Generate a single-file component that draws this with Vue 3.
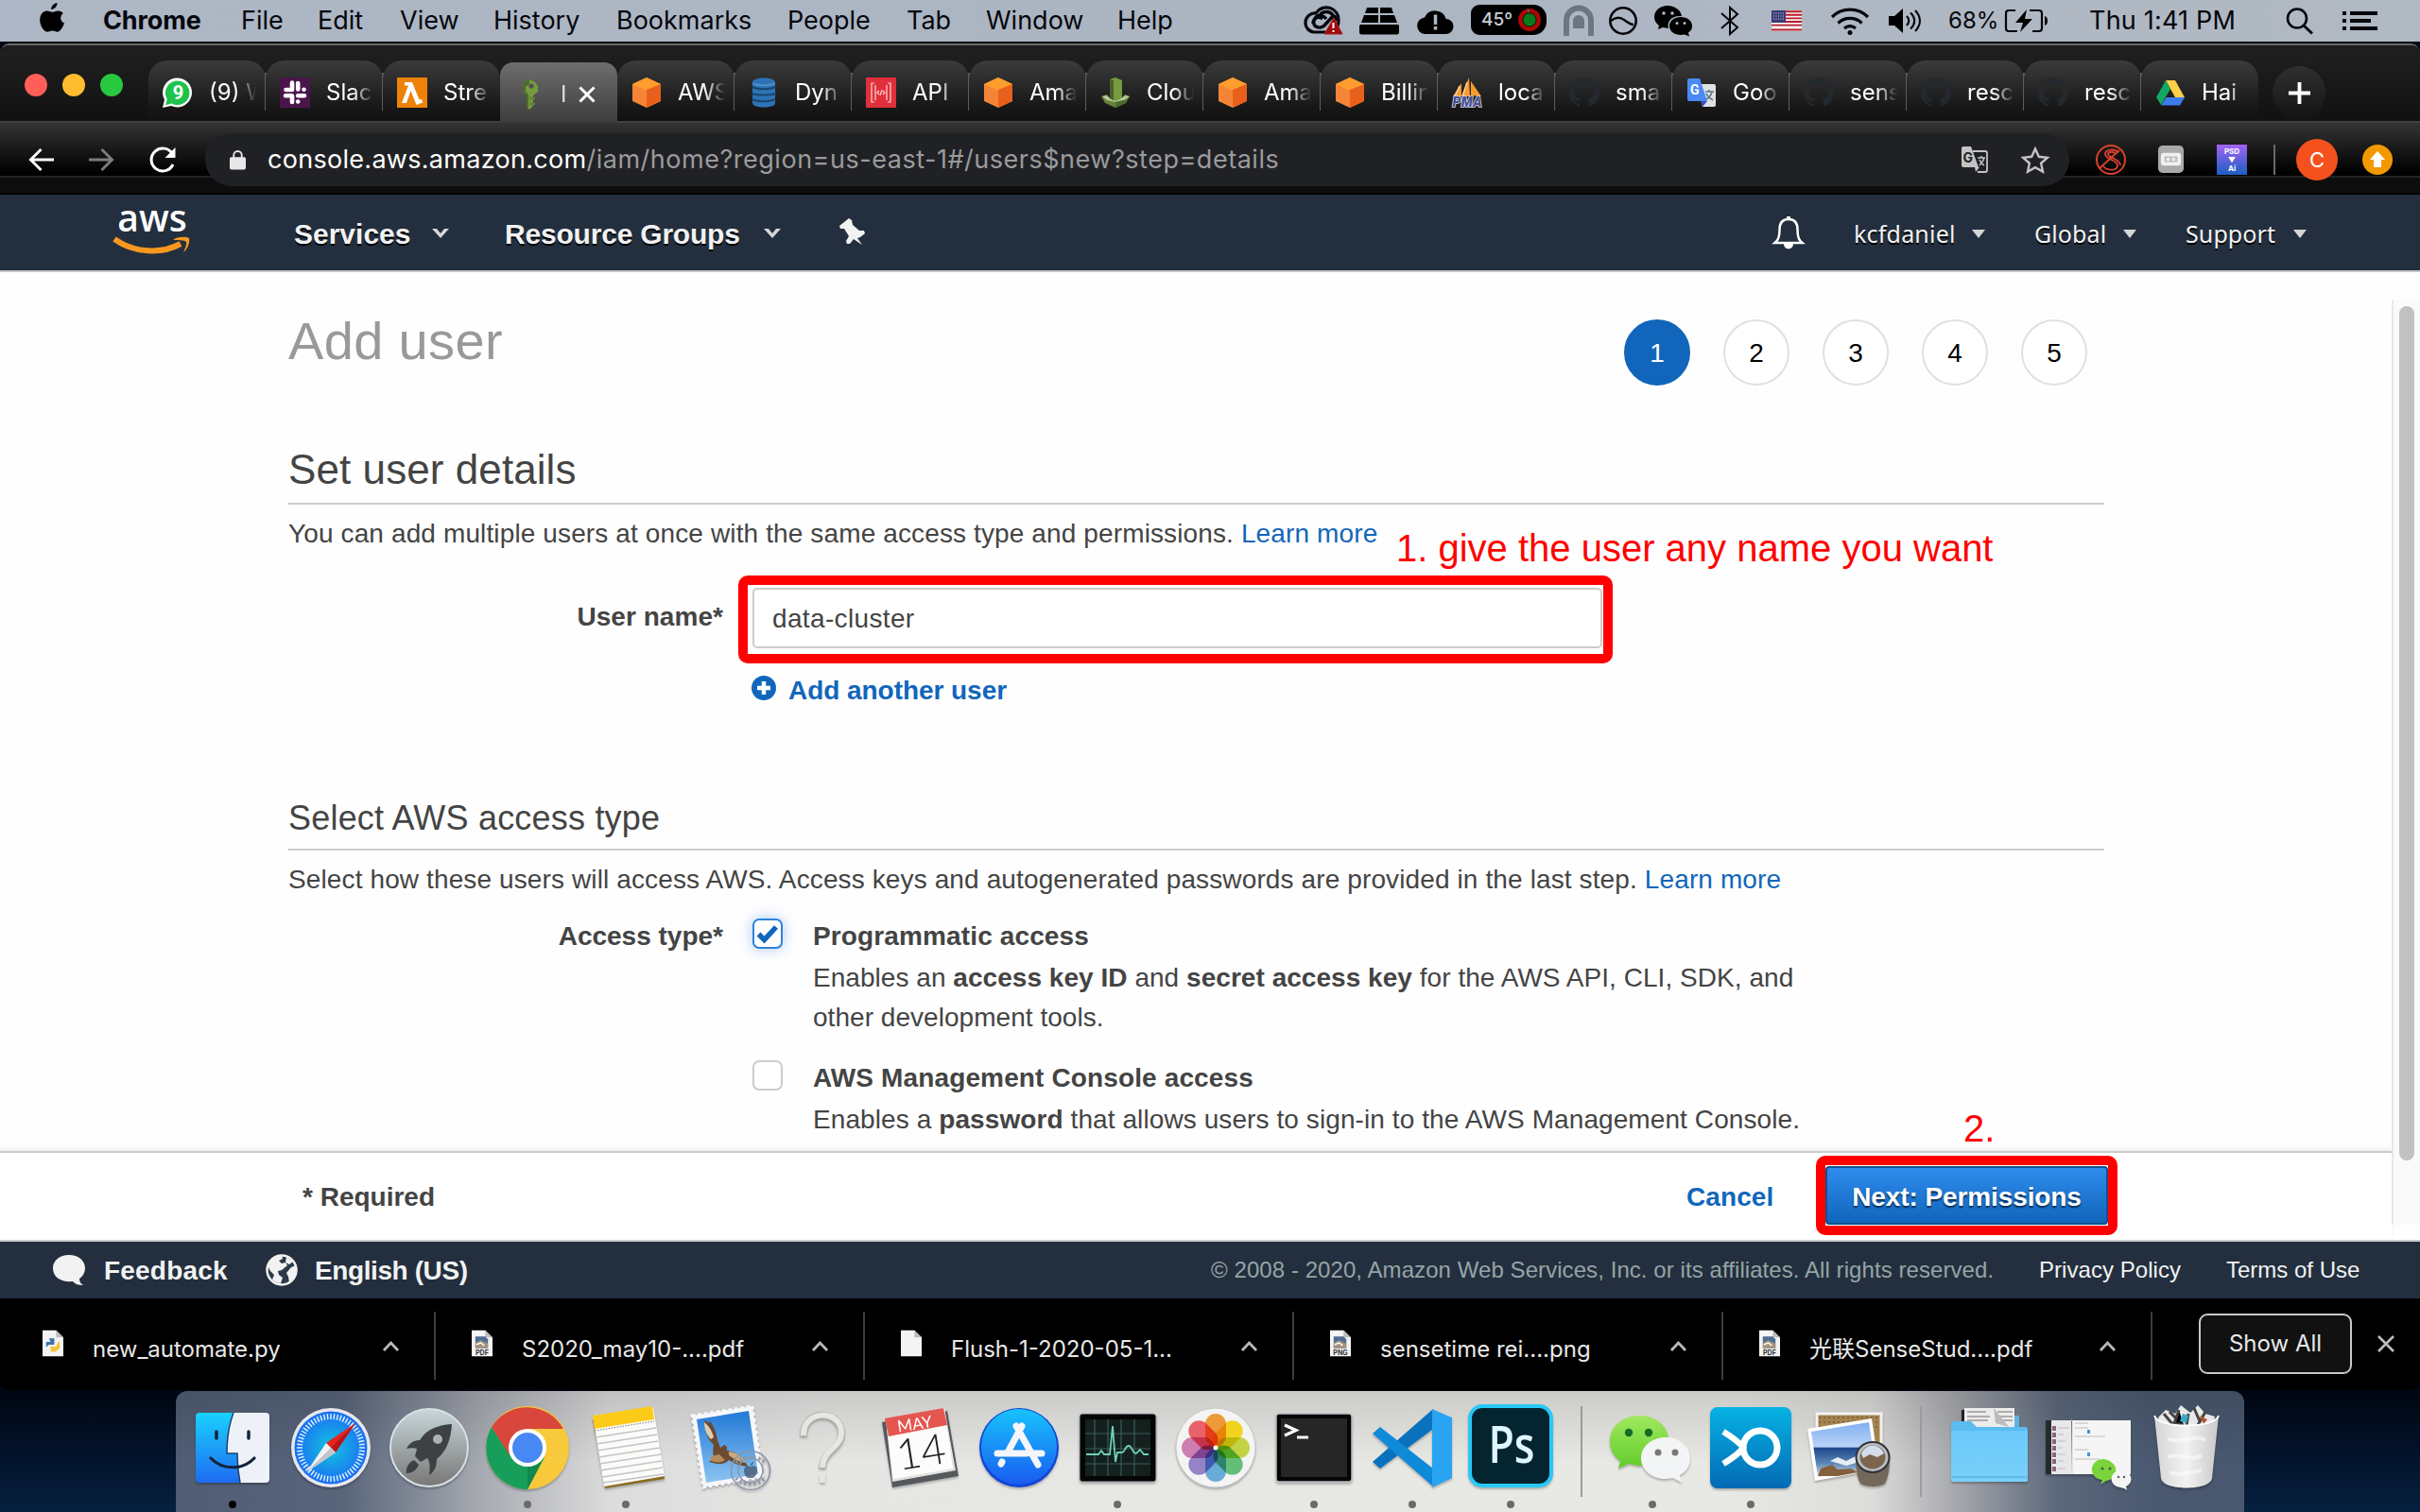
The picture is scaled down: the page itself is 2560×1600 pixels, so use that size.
<script setup>
const menus = [
  { t: 'Chrome', w: 146, bold: true },
  { t: 'File', w: 81 },
  { t: 'Edit', w: 87 },
  { t: 'View', w: 99 },
  { t: 'History', w: 130 },
  { t: 'Bookmarks', w: 181 },
  { t: 'People', w: 126 },
  { t: 'Tab', w: 84 },
  { t: 'Window', w: 139 },
  { t: 'Help', w: 100 },
]

const cube = `<path d="M16 0 31 7v18l-15 7L1 25V7z" fill="#f58536"/><path d="M16 0 31 7 16 14 1 7z" fill="#ff9d2e"/><path d="M16 13 31 7v18l-15 7z" fill="#e8601c"/>`
const github = `<path d="M16 0C7 0 0 7 0 16c0 7 4.500 13 11 15v-3.500c-4 .9-5-1.700-5.500-3C5 23.300 4 22.700 3.500 22c2.500-.5 3.500 3 5.500 3.300.9.1 1.700 0 2.300-.4.100-1.100.6-2 1.200-2.500-4-.6-7-2.400-7-8 0-1.700.6-3.200 1.600-4.300-.3-1.300-.2-2.900.4-4.300 1.700 0 3.100.9 4.300 1.800a15 15 0 0 1 8.400 0c1.200-.9 2.600-1.800 4.300-1.800.6 1.400.7 3 .4 4.300 1 1.100 1.600 2.600 1.600 4.300 0 5.600-3 7.400-7 8 .8.700 1.300 2 1.300 3.500V31C27.500 29 32 23 32 16 32 7 25 0 16 0z" fill="#24292e"/>`
const art = {
  whatsapp: `<path d="M0 32l2-8.500A15.500 15.500 0 1 1 9 30z" fill="#fff"/><path d="M3 29.200 4.800 23a12.800 12.800 0 1 1 4.700 4.500z" fill="#1fc24c"/><text x="16.500" y="23" font-size="20" font-weight="700" text-anchor="middle" fill="#fff">9</text>`,
  slack: `<rect width="32" height="32" fill="#4a154b"/><g stroke="#fff" stroke-width="4.600" stroke-linecap="round"><path d="M13 5.500v7M6.500 13h0M19.200 6v6.500M25.500 12.700h0M13 19.500V26M6 19.200h6.500M19.200 19.200H26M19.200 25.500v0M13 13H6.500"/></g>`,
  lambda: `<rect width="32" height="32" fill="#ee8208"/><path d="M8 5h8l7.500 18.500 2.500-.8 1.200 3.800-6.700 2.500L14.500 14 10 27H5l7-18.500H8z" fill="#fff"/>`,
  key: `<path d="M10 3l6-3 6 3 3 4v6l-5 4v11l-4 4-3-3V17l-4-4V7z" fill="#759c3e"/><path d="M10 3l6-3v5l-4 3v5l3 3v14l-2-1V17l-4-4V7z" fill="#4b6b2c"/><circle cx="18" cy="7" r="2.600" fill="#505050"/><path d="M16 18l6 1v2l-6 1zM16 24l6 1v2l-6 1z" fill="#648339"/>`,
  cube,
  dynamo: `<path d="M4 5c0-6 24-6 24 0v22c0 6-24 6-24 0z" fill="#2e73b8"/><path d="M4 10c5 3 19 3 24 0M3 17c5 2 21 2 26 0M4 23c5 3 19 3 24 0" stroke="#1a476f" stroke-width="2.200" fill="none"/><path d="M4 6c5 3 19 3 24 0" stroke="#5294cf" stroke-width="1.500" fill="none"/>`,
  api: `<rect width="32" height="32" fill="#e0303b"/><path d="M9 6H6v20h3M23 6h3v20h-3M10 8v16M22 8v16M14 14l-2 2 2 2M18 14l2 2-2 2M17 13l-2 6" stroke="#ffd9da" stroke-width="1.200" fill="none"/>`,
  cloud9: `<path d="M10 2l6-2 7 3v20l-7 4-6-3z" fill="#759c3e"/><path d="M10 2l4 1v22l-4-2z" fill="#4b612c"/><path d="M1 20l6-2 4 6 5 2 6-3 4-5 5 2-4 7-11 5-11-5z" fill="#648339"/><path d="M2 20l5-1 4 4 5 2 5-2 5-4 5 1-6 4-9 2-9-2z" fill="#b7ca9d"/><path d="M16 26v6l11-5 2-4z" fill="#4b6b2c"/>`,
  pma: `<path d="M18 0l1 20H10zM10 6v14H1zM20 4l11 16-11-1z" fill="#f89c2e"/><path d="M16 5l-5 15M8 9 3 20" stroke="#fbd3a0" stroke-width="1.500"/><text x="16" y="31" font-size="14" font-weight="900" font-style="italic" text-anchor="middle" fill="#4a508f" stroke="#d5d8ea" stroke-width="1.600" paint-order="stroke" textLength="31">PMA</text>`,
  github,
  gtrans: `<path d="M12 7h17a2 2 0 0 1 2 2v20a2 2 0 0 1-2 2H17z" fill="#dfe1e5"/><path d="M3 1h11l8 24H3a2 2 0 0 1-2-2V3a2 2 0 0 1 2-2z" fill="#4a8af4"/><path d="M15 25h7l-5 6z" fill="#3a4fc0"/><path d="M20 15h9M24 13v2M27 15c-1 4-4 7-6 8M21 17c1 3 4 5 7 7" stroke="#607988" stroke-width="1.600" fill="none"/><text x="4" y="18" font-size="14" font-weight="700" fill="#fff">G</text>`,
  drive: `<path d="M11 3h10l10 18H21z" fill="#ffcf48"/><path d="M11 3l5 9L6 29 1 21z" fill="#11a861"/><path d="M11.500 21H31l-5 8.500H6z" fill="#3b7ded"/>`,
}
const tabs = [
  ['whatsapp', '(9) W'], ['slack', 'Slac'], ['lambda', 'Stre'], ['key', 'I', true],
  ['cube', 'AWS'], ['dynamo', 'Dyn'], ['api', 'API'], ['cube', 'Ama'], ['cloud9', 'Clou'],
  ['cube', 'Ama'], ['cube', 'Billin'], ['pma', 'loca'], ['github', 'sma'], ['gtrans', 'Goo'],
  ['github', 'sens'], ['github', 'resc'], ['github', 'resc'], ['drive', 'Hai'],
]
const downloads = [
  ['new_automate.py', 'py'], ['S2020_may10-....pdf', 'PDF'], ['Flush-1-2020-05-1...', ''],
  ['sensetime rei....png', 'PNG'], ['光联SenseStud....pdf', 'PDF'],
]
const ticks = Array.from({ length: 60 }, (_, i) => i * 6)
const petals = ['#f7941e', '#fdd900', '#c5d92d', '#54c06a', '#5aa9e0', '#8f77c9', '#d274b0', '#f4515a']
</script>

<template>
  <div class="screen">
    <!-- macOS menu bar -->
    <header class="menubar">
      <svg class="apple" viewBox="0 0 28 32"><path d="M19.500 0c.3 3.500-3 7-6.300 6.900C12.900 3.600 16.200.3 19.500 0zM25.800 11c-3.300 2-3.800 8.300 1.200 10.600-1.200 3.800-4.200 9-7.200 9.200-2 .1-3-1.200-5.300-1.200-2.400 0-3.300 1.200-5.200 1.200C5.500 30.800 1.500 24.500 1.200 18.700.9 12.400 4.700 8.600 8.700 8.500c2.300 0 3.900 1.300 5.600 1.300 1.700 0 3.400-1.500 6.400-1.400 1.900.1 3.900 1 5.100 2.600z"/></svg>
      <span v-for="m in menus" :key="m.t" class="menu" :class="{ bold: m.bold }" :style="{ width: m.w + 'px' }">{{ m.t }}</span>
      <div class="status">
        <div class="cell c1"><svg width="42" height="30" viewBox="0 0 42 30"><path d="M24 27H12A10 10 0 1 1 14 7a13 13 0 0 1 24 8c0 4-2 8-5 10" fill="none" stroke="#05060c" stroke-width="3.200"/><path d="M25 13c-3-4-8-5-11-2s-3 8 0 10 7 1 9-1l8-9c3-2 5 1 4 4M11 18c0-5 5-9 10-5M18 9c4-5 12-5 15 2" fill="none" stroke="#05060c" stroke-width="3.400"/><path d="M33 12 42 29H23z" fill="#9c0a0e" stroke="#b01a1e" stroke-linejoin="round"/><path d="M32.500 17v6M32.500 25v2" stroke="#fff" stroke-width="2"/></svg></div>
        <div class="cell c2"><svg width="42" height="29" viewBox="0 0 42 29"><path d="M8 0h12v6H6zM22 0h12l2 6H22zM5 8h15v8H2zM22 8h15l3 8H22z"/><path d="M1.500 18h39a1.500 1.500 0 0 1 1.500 1.500V26a2.500 2.500 0 0 1-2.500 2.500h-37A2.500 2.500 0 0 1 0 26v-6.500A1.500 1.500 0 0 1 1.500 18z"/></svg></div>
        <div class="cell c3"><svg width="41" height="27" viewBox="0 0 41 27"><path d="M9 27a8.800 8.800 0 0 1 0-17.500A12 12 0 0 1 31.500 11a8 8 0 0 1 0 16z"/><path d="M20.500 6.500V17M20.500 19v3.500" stroke="#adb7c4" stroke-width="3.500"/></svg></div>
        <div class="cell c4"><div class="temp"><b>45º</b><svg width="24" height="24" viewBox="0 0 24 24"><circle cx="12" cy="12" r="9.700" fill="none" stroke="#ab0505" stroke-width="4.600"/><path d="M9 0.500h3v4H10z" fill="#555"/><circle cx="12" cy="12" r="7" fill="#0b7a1c" stroke="#0a2a10" stroke-width="1"/></svg></div></div>
        <div class="cell c5"><svg width="32" height="32" viewBox="0 0 32 32"><path d="M3 32V15.500a13 13 0 0 1 26 0V32" fill="none" stroke="#6a7682" stroke-width="6"/><path d="M10 24v-8a6 6 0 0 1 12 0v8z" fill="#6a7682"/></svg></div>
        <div class="cell c6"><svg width="30" height="30" viewBox="0 0 30 30"><circle cx="15" cy="15" r="13.700" fill="none" stroke="#05060c" stroke-width="2.600"/><path d="M2 15c5-4 10-4 14-1s7 5 10 5" fill="none" stroke="#05060c" stroke-width="2.400"/></svg></div>
        <div class="cell c7"><svg width="41" height="32" viewBox="0 0 41 32"><path d="M14 0C6 0 0 5 0 12c0 4 2 7 5 9l-1 4 5-2 6 1c-2-8 4-14 14-13C28 4 21 0 14 0z"/><path d="M28 12c-7 0-12 4-12 9.500S21 31 28 31l4-.5 5 2-1-4c3-2 4-4 4-7 0-5.500-5-9.500-12-9.500z"/><g fill="#adb7c4"><circle cx="10" cy="8" r="1.800"/><circle cx="19" cy="8" r="1.800"/><circle cx="24" cy="18.500" r="1.500"/><circle cx="32" cy="18.500" r="1.500"/></g></svg></div>
        <div class="cell c8"><svg width="20" height="32" viewBox="0 0 20 32"><path d="M1 8l17 15-8 7V2l8 7L1 24" fill="none" stroke="#05060c" stroke-width="2"/></svg></div>
        <div class="cell c9"><svg width="32" height="22" viewBox="0 0 32 22"><path fill="#f4f4f6" d="M0 0h32v22H0z"/><path d="M0 1.200h32M0 4.800h32M0 8.400h32M0 12h32M0 15.600h32M0 20.500h32" stroke="#b81c28" stroke-width="1.900"/><path fill="#3a3b78" d="M0 0h15v13H0z"/><path d="M2 3h12M2 6h12M2 9h12" stroke="#ddd" stroke-width="1" stroke-dasharray="1 1.500"/></svg></div>
        <div class="cell c10"><svg width="42" height="29" viewBox="0 0 42 29"><path d="M2 10a27 27 0 0 1 38 0M8.500 16.500a18 18 0 0 1 25 0M15 22a9 9 0 0 1 12 0" fill="none" stroke="#05060c" stroke-width="3.200"/><circle cx="21" cy="26.500" r="2.500"/></svg></div>
        <div class="cell c11"><svg width="34" height="26" viewBox="0 0 34 26"><path d="M0 8h6l9-8v26l-9-8H0z"/><path d="M19 8c3 3 3 7 0 10M23 4.500c5.500 5 5.500 12 0 17M28 2c6.500 7 6.500 15 0 22" fill="none" stroke="#05060c" stroke-width="2.200"/></svg></div>
        <div class="cell c12">68%</div>
        <div class="cell c13"><svg width="47" height="26" viewBox="0 0 47 26"><path d="M12 2H5a3 3 0 0 0-3 3v16a3 3 0 0 0 3 3h9M27 2h10a3 3 0 0 1 3 3v16a3 3 0 0 1-3 3H30" fill="none" stroke="#05060c" stroke-width="2.200"/><path d="M24 1 12 15h8l-3 10 13-14h-8z"/><path d="M43 8c4 1 4 9 0 10z"/></svg></div>
        <div class="cell c14">Thu 1:41 PM</div>
        <div class="cell c15"><svg width="30" height="28" viewBox="0 0 30 28"><circle cx="12" cy="11.500" r="10" fill="none" stroke="#05060c" stroke-width="2.600"/><path d="M19 19l9 8.500" stroke="#05060c" stroke-width="3"/></svg></div>
        <div class="cell c16"><svg width="37" height="20" viewBox="0 0 37 20"><path d="M0 2h4M8 2h29M0 10h4M8 10h22M0 18h4M8 18h29" stroke="#05060c" stroke-width="4"/></svg></div>
      </div>
    </header>

    <!-- Browser window -->
    <div class="window">
      <div class="tabstrip">
        <div class="lights"><i class="r"></i><i class="y"></i><i class="g"></i></div>
        <div v-for="(t, i) in tabs" :key="i" class="tab" :class="{ active: t[2], nosep: i === 2 || i === 17 }">
          <svg class="fav" viewBox="0 0 32 32" v-html="art[t[0]]"></svg>
          <span class="title">{{ t[1] }}</span>
          <svg v-if="t[2]" class="tclose" viewBox="0 0 18 18"><path d="M1.500 1.500l15 15M16.500 1.500l-15 15" stroke="#fff" stroke-width="3"/></svg>
        </div>
        <div class="newtab"><svg viewBox="0 0 26 26"><path d="M13 1v24M1 13h24" stroke="#fff" stroke-width="4"/></svg></div>
      </div>
      <div class="toolbar">
        <svg class="back" viewBox="0 0 28 26"><path d="M28 13H3M14 1.500 2.500 13 14 24.500" fill="none" stroke="#fff" stroke-width="3"/></svg>
        <svg class="fwd" viewBox="0 0 28 26"><path d="M0 13h25M14 1.500 25.500 13 14 24.500" fill="none" stroke="#7d7d7d" stroke-width="3"/></svg>
        <svg class="reload" viewBox="0 0 28 28"><path d="M24.500 19A12 12 0 1 1 24 8" fill="none" stroke="#fff" stroke-width="3"/><path d="M27 1v11H16z" fill="#fff"/></svg>
        <div class="omnibox">
          <svg class="lock" viewBox="0 0 18 22"><rect y="8" width="18" height="14" rx="2" fill="#e8e8e8"/><path d="M4.500 9V6a4.500 4.500 0 0 1 9 0v3" fill="none" stroke="#e8e8e8" stroke-width="2"/></svg>
          <span class="host">console.aws.amazon.com</span><span class="path">/iam/home?region=us-east-1#/users$new?step=details</span>
          <svg class="gt" viewBox="0 0 28 28"><path d="M12 5h13a2 2 0 0 1 2 2v18a2 2 0 0 1-2 2H17" fill="none" stroke="#c3c3c3" stroke-width="1.800"/><path d="M2 0h8l8 22H2a2 2 0 0 1-2-2V2a2 2 0 0 1 2-2z" fill="#c3c3c3"/><path d="M14 22h5l-4 5z" fill="#c3c3c3"/><path d="M17 12h8M21 10v2M24 12c-1 4-3 6-5 8M19 14c1 3 3 5 5 6" stroke="#c3c3c3" stroke-width="1.500" fill="none"/><text x="1.500" y="17" font-size="14" font-weight="700" fill="#202124">G</text></svg>
          <svg class="star" viewBox="0 0 30 28"><path d="M15 2.500l3.800 8.300 9 1-6.700 6 1.900 8.800-8-4.500-8 4.500 1.900-8.800-6.700-6 9-1z" fill="none" stroke="#c3c3c3" stroke-width="2.400"/></svg>
        </div>
        <svg class="e1" viewBox="0 0 32 32"><g fill="none" stroke="#d9422c"><circle cx="16" cy="16" r="15" stroke-width="2"/><path d="M23 8c-3-4-13-3-13 2 0 6 13 6 13 12 0 6-11 6-15 1M20 9c-3-2-7-1-7 1 0 4 13 5 13 12M4 25 25 6" stroke-width="1.800"/></g></svg>
        <svg class="e2" viewBox="0 0 28 30"><rect width="28" height="30" rx="5" fill="#a9a9a9"/><rect x="3" y="8" width="22" height="14" rx="3" fill="#f0f0f0"/><path d="M7 12h14v6H7z" fill="#bbb"/><circle cx="11" cy="15" r="2" fill="#eee"/><circle cx="17" cy="15" r="2" fill="#eee"/></svg>
        <div class="e3"><span>PSD</span><span>▼</span><span>Ai</span></div>
        <i class="esep"></i>
        <div class="avatar">C</div>
        <div class="update"><svg viewBox="0 0 18 18"><path d="M9 0l8 9h-4v8H5V9H1z" fill="#fff"/></svg></div>
      </div>
      <div class="bookmarks"></div>

      <nav class="awsnav">
        <div class="logo"><span>aws</span><svg viewBox="0 0 82 20"><path d="M1 2c21 15 50 16 70 5" fill="none" stroke="#f7981f" stroke-width="6"/><path d="M63 3c4-4 14-4 17-2 1 4-1 11-6 15 2-5 4-9 3-11-2-2-9-2-14-2z" fill="#f7981f"/></svg></div>
        <span class="nb services">Services</span><svg class="car a" viewBox="0 0 18 10"><path d="M0 0h5l4 5 4-5h5L9 10z" fill="#d5d5d5"/></svg>
        <span class="nb groups">Resource Groups</span><svg class="car b" viewBox="0 0 18 10"><path d="M0 0h5l4 5 4-5h5L9 10z" fill="#d5d5d5"/></svg>
        <svg class="pin" viewBox="0 0 26 28"><path d="M9 0l3 2 1 5 7 6 5 0 1 3-5 4-3 1 5 7-9-6-4 5-3 0-1-3 3-5-5-8-4 0-1-3 5-4z" fill="#f2f2f2"/></svg>
        <svg class="bell" viewBox="0 0 32 35"><path d="M16 3c7 0 9.500 5 9.500 11 0 8 1.500 11 5 14H1.500c3.500-3 5-6 5-14C6.500 8 9 3 16 3z" fill="none" stroke="#fff" stroke-width="2.500"/><path d="M14 0h4v4h-4zM11 29h10c0 7-10 7-10 0z" fill="#fff"/></svg>
        <span class="nr u">kcfdaniel</span><i class="tri"></i>
        <span class="nr gl">Global</span><i class="tri"></i>
        <span class="nr su">Support</span><i class="tri"></i>
      </nav>

      <div class="page">
        <main>
          <div class="head">
            <h1>Add user</h1>
            <ol class="steps"><li class="on">1</li><li>2</li><li>3</li><li>4</li><li>5</li></ol>
          </div>
          <h2>Set user details</h2>
          <p class="p1">You can add multiple users at once with the same access type and permissions. <a>Learn more</a></p>
          <div class="frow">
            <label>User name*</label>
            <div class="mark"><div class="input">data-cluster</div></div>
            <span class="note n1">1. give the user any name you want</span>
          </div>
          <div class="another"><svg viewBox="0 0 26 26"><circle cx="13" cy="13" r="13" fill="#1166bb"/><path d="M13 6v14M6 13h14" stroke="#fff" stroke-width="4.500"/></svg><b>Add another user</b></div>
          <h3>Select AWS access type</h3>
          <p class="p2">Select how these users will access AWS. Access keys and autogenerated passwords are provided in the last step. <a>Learn more</a></p>
          <div class="arow first">
            <label>Access type*</label>
            <div class="check on"><svg viewBox="0 0 24 20"><path d="M2.500 10.500 8.500 16.500 21 3" fill="none" stroke="#1166bb" stroke-width="5.500"/></svg></div>
            <div class="opt"><b>Programmatic access</b><div class="d1">Enables an <b>access key ID</b> and <b>secret access key</b> for the AWS API, CLI, SDK, and<br>other development tools.</div></div>
          </div>
          <div class="arow second">
            <label></label>
            <div class="check"></div>
            <div class="opt"><b>AWS Management Console access</b><div class="d2">Enables a <b>password</b> that allows users to sign-in to the AWS Management Console.</div></div>
          </div>
        </main>
        <div class="actions">
          <b class="req">* Required</b>
          <b class="cancel">Cancel</b>
          <div class="mark2"><div class="next">Next: Permissions</div><span class="note n2">2.</span></div>
        </div>
        <div class="track"><div class="thumb"></div></div>
      </div>

      <footer class="awsfoot">
        <svg class="bubble" viewBox="0 0 34 33"><path d="M17 0c10 0 17 6 17 14 0 5-3 9-6 11 0 3 1 5 4 7-5 0-8-1-11-4C9 29 0 24 0 14 0 6 7 0 17 0z" fill="#f2f2f2"/></svg>
        <b class="fb">Feedback</b>
        <svg class="globe" viewBox="0 0 34 34"><circle cx="17" cy="17" r="15.500" fill="#2c3b4a" stroke="#f2f2f2" stroke-width="2.500"/><path d="M3 9c3-5 8-8 14-8l1 4-4 2 3 3 4-1 2 3-6 5-4 1 1 4 4 3-2 6c-4 0-7-2-9-4l2-5-4-4-2-4zM22 3l7 5-4 3-4-2zM27 14l5-2 1 6-3 8-5 4-1-6-2-4z" fill="#f2f2f2"/></svg>
        <b class="lang">English (US)</b>
        <span class="copy">© 2008 - 2020, Amazon Web Services, Inc. or its affiliates. All rights reserved.</span>
        <span class="pp">Privacy Policy</span>
        <span class="tou">Terms of Use</span>
      </footer>

      <div class="downloads">
        <div v-for="d in downloads" :key="d[0]" class="dl">
          <svg class="file" viewBox="0 0 23 29"><path d="M0 0h15l8 8v21H0z" fill="#f4f4f4"/><path d="M15 0v8h8z" fill="#bbb"/>
            <g v-if="d[1] === 'py'"><path d="M7 9h6v7H7l-3 3v-6h5z" fill="#3b73a8"/><path d="M9 24v-6h6l2-5h2v7l-5 4z" fill="#f2c53c"/></g>
            <g v-else-if="d[1]"><path d="M4 7h11l3 3v10H4z" fill="#4f6d93"/><path d="M4 14l6-3 8 4v5H4z" fill="#a8937a"/><path d="M5 16l5-2 4 3" stroke="#fff" stroke-width="1.500" fill="none"/><text x="11.500" y="27.500" font-size="7.500" font-weight="700" text-anchor="middle" fill="#333">{{ d[1] }}</text></g>
          </svg>
          <span>{{ d[0] }}</span>
          <svg class="chev" viewBox="0 0 18 11"><path d="M1.500 10 9 2l7.500 8" fill="none" stroke="#b9b9b9" stroke-width="2.800"/></svg>
        </div>
        <div class="showall">Show All</div>
        <svg class="dclose" viewBox="0 0 18 18"><path d="M1 1l16 16M17 1 1 17" stroke="#bdbdbd" stroke-width="2.600"/></svg>
      </div>
    </div>

    <!-- Dock -->
    <div class="dock">
      <svg width="0" height="0" class="defs"><defs>
        <linearGradient id="gFinder" x2="0" y2="1"><stop stop-color="#19d1fd"/><stop offset="1" stop-color="#1f6cf2"/></linearGradient>
        <linearGradient id="gGrey" x2="0" y2="1"><stop stop-color="#c8d6da"/><stop offset="1" stop-color="#777775"/></linearGradient>
        <radialGradient id="gSafari"><stop stop-color="#13c4e0"/><stop offset="1" stop-color="#1b6ff2"/></radialGradient>
        <linearGradient id="gStore" x2="0" y2="1"><stop stop-color="#17c3fd"/><stop offset="1" stop-color="#1a5cf0"/></linearGradient>
        <linearGradient id="gSky" x2="0" y2="1"><stop stop-color="#2179d6"/><stop offset="1" stop-color="#8cc4f2"/></linearGradient>
        <linearGradient id="gGreen" x2="0" y2="1"><stop stop-color="#a0e860"/><stop offset="1" stop-color="#62cc2a"/></linearGradient>
        <linearGradient id="gBlue" x2="0" y2="1"><stop stop-color="#06b2e4"/><stop offset="1" stop-color="#0469b4"/></linearGradient>
        <linearGradient id="gSea" x2="0" y2="1"><stop stop-color="#7fb0f2"/><stop offset=".45" stop-color="#b9d3f7"/><stop offset=".47" stop-color="#1c4689"/><stop offset=".75" stop-color="#5b86b8"/><stop offset="1" stop-color="#e3e8ee"/></linearGradient>
        <linearGradient id="gFold" x2="0" y2="1"><stop stop-color="#6ac9fa"/><stop offset="1" stop-color="#7ad0fa"/></linearGradient>
        <linearGradient id="gTrash" x2="1" y2="0"><stop stop-color="#d5d5d5"/><stop offset=".5" stop-color="#f2f2f2"/><stop offset="1" stop-color="#c9c9c9"/></linearGradient>
      </defs></svg>
      <div class="app run dark"><svg viewBox="0 0 104 112"><rect x="13" y="23" width="78" height="74" rx="4" fill="url(#gFinder)"/><path d="M53 23h34a4 4 0 0 1 4 4v66a4 4 0 0 1-4 4H60c-2-10-3-20-3-31H46c0-16 2-30 7-43z" fill="#eef2f8"/><path d="M53 23c-5 13-7 27-7 43h11c0 11 1 21 3 31" fill="none" stroke="#22406b" stroke-width="1.500"/><path d="M35 43v7M69 43v7" stroke="#14233a" stroke-width="3.500" stroke-linecap="round"/><path d="M29 71c12 13 34 13 46 0" fill="none" stroke="#14233a" stroke-width="3.200" stroke-linecap="round"/></svg></div>
      <div class="app"><svg viewBox="0 0 104 112"><circle cx="52" cy="60" r="42" fill="#e8e8ec"/><circle cx="52" cy="60" r="38.500" fill="url(#gSafari)"/><path v-for="a in ticks" :key="a" d="M52 24v6" stroke="#e6f4ff" stroke-width="1.400" :transform="`rotate(${a} 52 60)`"/><path d="M78 34 57 65 47 55z" fill="#e8231f"/><path d="M78 34 57 65 52 60z" fill="#b8151a"/><path d="M26 86 47 55l10 10z" fill="#f2f2f2"/><path d="M26 86 52 60l5 5z" fill="#c3c3c8"/></svg></div>
      <div class="app"><svg viewBox="0 0 104 112"><circle cx="52" cy="60" r="41" fill="url(#gGrey)" stroke="#d5e2e5" stroke-width="2"/><path d="M76 35c-16 1-27 6-34 17-6 0-11 3-14 9 5-1 8-1 11 0l-2 8 6 6 7-4c3 4 3 8 2 18 6-4 8-10 8-17 10-8 15-20 16-37z" fill="#3e4143"/><circle cx="61" cy="51" r="5" fill="#a9b3b5"/><path d="M36 73c-6 3-9 8-8 14 6 0 10-3 13-9z" fill="#3e4143"/></svg></div>
      <div class="app run"><svg viewBox="0 0 104 112"><circle cx="52" cy="60" r="44" fill="#f9c93c"/><path d="M14 38A44 44 0 0 0 52 104L69 71 52 60 33 66z" fill="#189e5b"/><path d="M14 38 33 68 52 60V40h38A44 44 0 0 0 14 38z" fill="#d9463c"/><path d="M52 104 70 70 52 60z" fill="#128a4d"/><circle cx="52" cy="60" r="20" fill="#fff"/><circle cx="52" cy="60" r="16" fill="#4788f4"/></svg></div>
      <div class="app run"><svg viewBox="0 0 104 112"><path d="M17 30 80 19 93 93 30 103z" fill="#8a6c20"/><path d="M17 26 81 17 93 90 29 101z" fill="#fbfbf9"/><path d="M17 26 80 16 82 30 19 40z" fill="#fbcb17"/><g stroke="#c4c4c4" stroke-width="1.500"><path d="M20 49 84 39M21 56 85 46M22 63 86 53M23 70 88 60M24 77 89 67M25 84 90 74M27 91 91 81M28 97 92 88"/></g><path d="M19 42 82 32" stroke="#777" stroke-dasharray="1.500 1.500"/></svg></div>
      <div class="app"><svg viewBox="0 0 104 112"><path d="M18 26 82 16 93 91 30 102z" fill="#f6f7fb" stroke="#f6f7fb" stroke-width="3" stroke-dasharray="3.500 3"/><path d="M23 30 78 21 88 88 33 97z" fill="url(#gSky)"/><path d="M31 32c2-1 3 0 4 2l2-2c5 6 7 13 8 20l3 8 4-3 3 2v4c8 1 17 5 22 17-8-1-14-3-20-7-4 5-11 5-21 2l5-5c-1-5-1-9 0-13-6-6-10-14-10-25z" fill="#6b4a30"/><path d="M31 33c4 3 8 8 10 16l-3 2c-5-5-7-11-7-18z" fill="#dccdb8"/><path d="M57 64c7 1 14 4 18 12-7-1-13-4-18-8z" fill="#c9ab80"/><path d="M38 69l9-2 6 6c-4 3-9 3-15 1z" fill="#b58c5c"/><g fill="none" stroke="#8d95a6" stroke-width="1.600"><circle cx="80" cy="84" r="20.500"/><circle cx="80" cy="84" r="13"/></g><path d="M80 80c4-2 7 0 7 4s-3 8-5 8h-4c-3 0-5-4-5-8s4-6 7-4zM80 79c0-3 1-4 3-4 0 2-1 4-3 4z" fill="#4b5a70" opacity=".8"/><path d="M65 76c5-8 25-8 30 0M65 92c5 8 25 8 30 0" stroke="#8d95a6" stroke-width="4" stroke-dasharray="2 3" fill="none"/></svg></div>
      <div class="app"><svg viewBox="0 0 104 112"><path d="M32 48c-1-30 40-29 40-3 0 16-20 18-20 37" fill="none" stroke="#b0b0ad" stroke-width="7.500"/><path d="M32 47c-1-28 40-28 40-3 0 16-20 18-20 37M52 87v10" fill="none" stroke="#e6e6e4" stroke-width="6"/></svg></div>
      <div class="app"><svg viewBox="0 0 104 112"><path d="M11 33 80 21 92 90 22 102z" fill="#55595c"/><path d="M15 30 77 18 89 84 22 96z" fill="#e2e2e0"/><path d="M15 30 77 18 86 82 23 93z" fill="#fcfcfb"/><path d="M14 29 76 18 80 36 18 48z" fill="#e65650"/><g transform="rotate(-9 52 50)"><text x="48" y="40" font-size="17" text-anchor="middle" fill="#fff" class="may">MAY</text><text x="50" y="80" font-size="45" text-anchor="middle" fill="#222" class="thin">14</text></g></svg></div>
      <div class="app"><svg viewBox="0 0 104 112"><circle cx="52" cy="60" r="42" fill="#1146d6"/><circle cx="52" cy="59" r="40" fill="url(#gStore)"/><g stroke="#f4f6fb" stroke-width="7" stroke-linecap="round"><path d="M55 37 40 65M34 75l-1 2M49 37 72 78M29 66h31M68 66h8"/></g></svg></div>
      <div class="app run"><svg viewBox="0 0 104 112"><rect x="12" y="24" width="81" height="72" rx="3" fill="#050505" stroke="#a8b4b8" stroke-width="1"/><rect x="18" y="30" width="69" height="60" fill="#13201e"/><path d="M18 45h69M18 61h69M18 77h69M28 30v60M42 30v60M56 30v60M70 30v60" stroke="#3a5d55" stroke-width="1.200"/><path d="M19 67h13l3-4 3 4h6l3-30 3 38 2-10h5c3 0 3-7 7-7s4 9 8 8l4-4 4 5h5" fill="none" stroke="#6fd0b4" stroke-width="1.800"/></svg></div>
      <div class="app"><svg viewBox="0 0 104 112"><circle cx="52" cy="60" r="42" fill="#f4f4f4" stroke="#c9c9c9" stroke-width="1"/><g class="mult"><rect v-for="(c, i) in petals" :key="c" x="41" y="24" width="22" height="35" rx="11" :fill="c" opacity=".88" :transform="`rotate(${i * 45} 52 60)`"/></g><circle cx="52" cy="60" r="2.500" fill="#fff"/></svg></div>
      <div class="app run"><svg viewBox="0 0 104 112"><rect x="12" y="24" width="80" height="72" rx="3" fill="#060606" stroke="#b9c0c4" stroke-width="1.500"/><rect x="17" y="29" width="70" height="62" fill="#262626"/><path d="M21 36l12 5.500-12 5.500" fill="none" stroke="#fff" stroke-width="3.200"/><path d="M34 49h12" stroke="#fff" stroke-width="3"/></svg></div>
      <div class="app run"><svg viewBox="0 0 104 112"><path d="M10 75 18 82 74 40V19z" fill="#0a72bd"/><path d="M10 45 18 38 74 82v19z" fill="#0f8ad8"/><path d="M73 19 94 28v64l-21 10z" fill="#28a4f3"/></svg></div>
      <div class="app run"><svg viewBox="0 0 104 112"><rect x="7" y="14" width="90" height="88" rx="15" fill="#26c9f8"/><rect x="11" y="18" width="82" height="80" rx="11" fill="#04242f"/><text x="53" y="76" font-size="54" font-weight="700" text-anchor="middle" fill="#dff5fd" class="ps" textLength="49" lengthAdjust="spacingAndGlyphs">Ps</text></svg></div>
      <i class="dsep s1"></i>
      <div class="app run"><svg viewBox="0 0 104 112"><path d="M38 26C20 26 7 38 7 53c0 9 4 16 11 21l-2 8 11-5 11 2c19 0 31-12 31-27S56 26 38 26z" fill="url(#gGreen)"/><path d="M66 49c-15 0-26 10-26 22s11 22 26 22l8-1 9 5-2-8c7-4 11-10 11-17 0-13-11-23-26-23z" fill="#f3f4f5"/><g fill="#146b24"><circle cx="27" cy="44" r="4.200"/><circle cx="48" cy="44" r="4.200"/></g><g fill="#777"><circle cx="58" cy="65" r="3.500"/><circle cx="76" cy="65" r="3.500"/></g></svg></div>
      <div class="app run"><svg viewBox="0 0 104 112"><rect x="9" y="17" width="86" height="86" rx="8" fill="url(#gBlue)"/><circle cx="62" cy="60" r="18" fill="none" stroke="#fff" stroke-width="7"/><path d="M23 43c8 5 18 12 21 17-3 5-13 12-21 17" fill="none" stroke="#fff" stroke-width="6.500"/></svg></div>
      <div class="app"><svg viewBox="0 0 104 112"><rect x="18" y="24" width="68" height="46" fill="#a4834f" stroke="#f2f2f2" stroke-width="3"/><path d="M20 28h64M20 33h64M20 38h64" stroke="#5c4526" stroke-dasharray="2 3"/><path d="M8 40 76 29 84 83 16 95z" fill="#fff"/><path d="M12 43 73 33 80 80 19 91z" fill="url(#gSea)"/><path d="M19 90l3-8 12-4 6 5 14-1 8 4-22 4z" fill="#85603c"/><path d="M32 74l8-4 9 4 10-5 4 6-14 4z" fill="#e7edf4"/><path d="M59 70h36c0 12-1 20-5 28-6 4-20 4-26 0-4-8-5-16-5-28z" fill="#74685a"/><ellipse cx="77" cy="70" rx="18.500" ry="17" fill="#2f3136"/><ellipse cx="77" cy="70" rx="16.500" ry="15" fill="#b9bec6"/><ellipse cx="77" cy="70" rx="13.500" ry="12.500" fill="#7d654c"/><path d="M65 66c5-11 19-11 24 0l-7 4-8-3-7 4z" fill="#d3deea"/></svg></div>
      <i class="dsep s2"></i>
      <div class="app"><svg viewBox="0 0 104 112"><path d="M22 20h4v20h-4z" fill="#222"/><path d="M25 18h53v28H25z" fill="#ececec"/><path d="M28 22h20M28 27h24M28 31h22M60 22h16M60 27h16M60 31h16" stroke="#999" stroke-width="1.500"/><path d="M56 18l16 20-14-4z" fill="#bbb"/><path d="M78 26h5v18h-5z" fill="#59b5e4"/><path d="M11 35a3 3 0 0 1 3-3h18l6 6h51a3 3 0 0 1 3 3v54H11z" fill="#5bbcf0"/><rect x="11" y="42" width="81" height="54" rx="2" fill="url(#gFold)"/><path d="M12 91h79" stroke="#58b3e2" stroke-width="1.500"/></svg></div>
      <div class="app"><svg viewBox="0 0 104 112"><rect x="7" y="31" width="90" height="57" fill="#f5f5f5"/><path d="M7 31h6v57H7z" fill="#26292d"/><path d="M13 31h21v57H13z" fill="#e8e8ea"/><path d="M34 31h1v57" stroke="#d5d5d5"/><g fill="#8d6572"><path d="M14 37h4v5h-4zM14 44h4v5h-4zM14 51h4v5h-4zM14 58h4v5h-4zM14 65h4v5h-4zM14 72h4v5h-4zM14 80h4v5h-4z"/></g><path d="M20 39h12M20 46h6M20 53h8M20 60h5M20 67h8M20 74h6M20 82h8M38 34h14M38 39h14M38 48h32M38 62h14M38 72h26" stroke="#bdbdbd" stroke-width="1.200"/><path d="M51 41h3v4h-3zM51 65h3v4h-3z" fill="#4a90d9"/><path d="M76 75a12 11 0 1 0-9 19l-2 5 6-4a12 11 0 0 0 5-20z" fill="#7bd43c"/><path d="M87 84a10 9 0 1 0-1 18l4 1 3 2-1-4a10 9 0 0 0-5-17z" fill="#f5f5f5"/><g fill="#555"><circle cx="67" cy="82" r="1.500"/><circle cx="75" cy="82" r="1.500"/><circle cx="84" cy="91" r="1.200"/><circle cx="90" cy="91" r="1.200"/></g></svg></div>
      <div class="app"><svg viewBox="0 0 104 112"><path d="M22 28l8-8 10 4 6-9 10 8 8-8 8 9 10 3-3 12H26z" fill="#e8e8e8"/><path d="M28 24l10 12M44 20l-5 14 10 2M60 18l6 14M72 22l-8 14M34 22l6 6M54 24l-2 12" stroke="#444" stroke-width="3"/><path d="M48 24l6 2-2 8-7-2z" fill="#3aa9c9"/><path d="M66 26l8 4-4 5z" fill="#b5552d"/><path d="M18 26c2 14 66 14 68 0l-7 66c-1 14-53 14-54 0z" fill="url(#gTrash)"/><path d="M18 26c4 14 64 14 68 0" fill="none" stroke="#fff" stroke-width="2"/><path d="M32 50c14 8 26-6 40 2M32 70c12-6 24 6 36-2M34 86c10 4 24 0 34-2" stroke="#fff" stroke-width="4" fill="none" opacity=".5"/></svg></div>
    </div>
  </div>
</template>

<style>
html, body { margin: 0; background: #020a18; overflow: hidden; }
</style>

<style scoped>
* { box-sizing: border-box; }
.screen { width: 2560px; height: 1600px; position: relative; overflow: hidden; display: flex; flex-direction: column; background: linear-gradient(#000612 0 92%, #03122a 96%, #06203f); font-family: "Liberation Sans", Arial, "Noto Sans CJK SC", sans-serif; color: #444; }
svg { display: block; flex: none; overflow: visible; }
h1, h2, h3, p, ol { margin: 0; padding: 0; font-weight: 400; }
i { display: block; flex: none; }

.menubar { height: 44px; flex: none; display: flex; align-items: center; padding-left: 41px; background: linear-gradient(90deg, #adb7c5, #abb5c2 50%, #b1b9c3); font: 400 27px/46px Inter, sans-serif; color: #05060c; white-space: nowrap; }
.apple { width: 28px; height: 32px; margin: -6px 40px 0 0; }
.menu { flex: none; letter-spacing: 0; }
.menu.bold { font-weight: 700; letter-spacing: -0.1px; }
.status { flex: none; display: flex; align-items: center; margin-left: 96px; height: 44px; }
.cell { flex: none; display: flex; align-items: center; height: 44px; letter-spacing: 0; }
.c1 { width: 60px } .c2 { width: 60px } .c3 { width: 58px } .c4 { width: 98px } .c5 { width: 48px } .c6 { width: 48px } .c7 { width: 70px } .c8 { width: 54px } .c9 { width: 62px } .c10 { width: 62px } .c11 { width: 63px } .c12 { width: 59px; font-size: 24px } .c13 { width: 90px } .c14 { width: 208px; letter-spacing: 0.2px } .c15 { width: 60px } .c16 { width: 40px }
.temp { width: 80px; height: 32px; background: #000; border-radius: 9px 14px 14px 9px; display: flex; align-items: center; padding-left: 11px; font-size: 19px; color: #c9ced6; margin-top: -3px; }
.temp b { font-weight: 500; width: 39px; }

.window { margin-top: 2px; height: 1425px; flex: none; border-radius: 10px; overflow: hidden; display: flex; flex-direction: column; background: #000; border-top: 2px solid #6a6a6a; }
.tabstrip { height: 82px; flex: none; display: flex; align-items: flex-end; background: linear-gradient(#1c1c1c, #1f1f1f 10%, #111 100%); border-bottom: 2px solid #404040; }
.lights { display: flex; gap: 16px; width: 157px; padding-left: 26px; flex: none; align-self: flex-start; padding-top: 30px; }
.lights i { width: 24px; height: 24px; border-radius: 50%; }
.lights .r { background: #ff5f57 } .lights .y { background: #febc2e } .lights .g { background: #28c840 }
.tab { flex: none; width: 124px; height: 64px; display: flex; align-items: center; padding: 3px 0 0 15px; border-radius: 20px 20px 0 0; background: linear-gradient(#3b3b3b, #161616 80%, transparent); position: relative; }
.tab::after { content: ""; position: absolute; right: -1px; top: 13px; height: 40px; width: 2px; background: #5c5c5c; }
.tab.nosep::after, .tab.active::after { display: none; }
.tab.active { background: linear-gradient(#6e6e6e, #3c3c3c); margin-bottom: -2px; border-radius: 14px 14px 0 0; }
.fav { width: 32px; height: 32px; font-family: Roboto, sans-serif; }
.title { flex: none; margin-left: 17px; white-space: nowrap; font: 400 24px/32px Inter, sans-serif; color: #fff; -webkit-mask-image: linear-gradient(90deg, #000 28px, transparent 50px); mask-image: linear-gradient(90deg, #000 28px, transparent 50px); }
.tab:last-of-type .title { -webkit-mask-image: none; mask-image: none; }
.active .title { width: 18px; color: #ddd; }
.tclose { width: 18px; height: 18px; margin-left: 1px; }
.newtab { width: 56px; height: 56px; border-radius: 50%; margin: 0 0 2px 15px; background: linear-gradient(#303030, #141414); display: flex; align-items: center; justify-content: center; }
.newtab svg { width: 25px; height: 25px; }
.toolbar { height: 68px; margin-bottom: -12px; flex: none; display: flex; align-items: center; position: relative; background: linear-gradient(#343434, #000 78%, transparent 78%); padding-top: 9px; z-index: 1; }
.back { width: 27px; height: 26px; margin-left: 30px; }
.fwd { width: 27px; height: 26px; margin-left: 37px; }
.reload { width: 29px; height: 28px; margin-left: 37px; }
.omnibox { margin-left: 30px; width: 1972px; height: 56px; border-radius: 28px; background: #202124; display: flex; align-items: center; font: 400 27px/56px Inter, sans-serif; color: #9a9b9d; flex: none; }
.lock { width: 17px; height: 22px; margin-left: 26px; }
.host { color: #fff; margin-left: 23px; letter-spacing: 0.29px; }
.path { flex: 1; letter-spacing: 0.52px; }
.gt { width: 28px; height: 28px; }
.star { width: 30px; height: 28px; margin: 0 21px 0 35px; }
.e1 { width: 32px; height: 32px; margin-left: 28px; }
.e2 { width: 29px; height: 29px; margin-left: 33px; }
.e3 { width: 32px; height: 32px; margin-left: 34px; background: linear-gradient(#a463f5, #1a5fc0); color: #fff; font: 700 8px/9px Inter, sans-serif; text-align: center; display: flex; flex-direction: column; padding-top: 3px; flex: none; }
.esep { width: 2px; height: 32px; background: #6a6a6a; margin-left: 28px; }
.avatar { width: 44px; height: 44px; border-radius: 50%; background: #f4511e; color: #fff; font: 400 22px/44px Inter, sans-serif; text-align: center; margin-left: 22px; flex: none; }
.update { width: 32px; height: 32px; border-radius: 50%; background: #f29900; margin-left: 26px; display: flex; align-items: center; justify-content: center; flex: none; }
.update svg { width: 18px; height: 18px; }
.bookmarks { flex: none; height: 20px; background: #0d0d0d; border-top: 2px solid #242424; border-bottom: 2px solid #000; }

.awsnav { height: 82px; flex: none; background: #232f3e; border-bottom: 2px solid #c4c4cb; display: flex; align-items: center; padding-left: 120px; color: #f2f2f2; text-shadow: 0 2px 0 #000; white-space: nowrap; }
.logo { width: 191px; flex: none; text-shadow: none; height: 52px; }
.logo span { display: block; width: 82px; text-align: center; font: 600 39px/28px "Open Sans", sans-serif; letter-spacing: 0; color: #fff; margin-top: -4px; }
.logo svg { width: 82px; height: 20px; margin-top: 7px; }
.nb { font-weight: 700; font-size: 30px; flex: none; padding-top: 3px; }
.services { width: 146px; letter-spacing: 0; } .groups { width: 274px; letter-spacing: -0.2px; }
.car { width: 18px; height: 10px; margin-top: 2px; } .car.a { margin-right: 59px } .car.b { margin-right: 63px }
.pin { width: 26px; height: 28px; margin-top: -2px; }
.bell { width: 32px; height: 35px; margin-left: 961px; margin-right: 53px; }
.nr { font: 400 25px/40px "Noto Sans", sans-serif; flex: none; padding-top: 1px; }
.u { width: 125px; letter-spacing: 0.2px } .gl { width: 94px; letter-spacing: 0.1px } .su { width: 114px; letter-spacing: 0.1px }
.tri { border: 7px solid transparent; border-top: 9px solid #d5d5d5; border-bottom: 0; margin-right: 52px; margin-top: 2px; }

.page { height: 1026px; flex: none; position: relative; background: #fefefe; border-bottom: 2px solid #c9cccf; font-size: 28px; line-height: 42px; white-space: nowrap; }
main { height: 930px; padding-left: 305px; overflow: hidden; width: 2530px; }
.head { height: 170px; display: flex; justify-content: space-between; width: 1903px; }
h1 { font-size: 56px; line-height: 64px; margin-top: 41px; color: #999; letter-spacing: 0.35px; }
.steps { list-style: none; display: flex; gap: 35px; margin-top: 50px; }
.steps li { width: 70px; height: 70px; border-radius: 50%; border: 2px solid #e0e0e0; text-align: center; line-height: 68px; color: #000; background: #fff; }
.steps .on { background: #1166bb; border-color: #1166bb; color: #fff; }
h2 { font-size: 44px; line-height: 52px; margin-top: 13px; padding-bottom: 9px; border-bottom: 2px solid #ccc; width: 1921px; letter-spacing: 0.08px; }
h3 { font-size: 36px; line-height: 44px; margin-top: 92px; padding-top: 1px; padding-bottom: 10px; border-bottom: 2px solid #ccc; width: 1921px; letter-spacing: 0.2px; }
p { margin-top: 10px; margin-bottom: -1px; }
.p1 { letter-spacing: 0.125px; } .p2 { letter-spacing: 0.12px; }
a { color: #1166bb; }
.frow { margin-top: 24px; display: flex; position: relative; }
label { width: 460px; text-align: right; font-weight: 700; flex: none; padding-top: 1px; }
.frow label { padding-top: 23px; letter-spacing: 0.05px; }
.mark { margin-left: 16px; width: 925px; height: 93px; border: 10px solid #f00; border-radius: 10px; padding: 3px 1px 6px 5px; }
.input { height: 64px; border: 2px solid #ccc; border-radius: 5px; padding-left: 19px; line-height: 62px; background: #fff; letter-spacing: 0.35px; }
.note { position: absolute; color: #f00; font-size: 40px; line-height: 46px; }
.n1 { left: 1172px; top: -52px; }
.another { margin: 7px 0 0 490px; display: flex; align-items: center; color: #1166bb; height: 42px; }
.another b { margin-top: 2px; letter-spacing: -0.05px; }
.another svg { width: 26px; height: 26px; margin: -4px 13px 0 0; }
.arow { display: flex; height: 86px; }
.first { margin-top: 18px; height: 128px; } .second { margin-top: 22px; }
.check { width: 32px; height: 32px; border: 2px solid #ccc; border-radius: 7px; margin: 3px 32px 0 31px; background: #fff; flex: none; }
.check.on { border-color: #2e83dd; box-shadow: 0 0 14px rgba(60, 130, 230, .45); padding: 4px 2px; }
.check svg { width: 24px; height: 20px; }
.opt { padding-top: 1px; }
.opt > b { letter-spacing: 0.13px; }
.opt > div { margin-top: 2px; }
.d1 { letter-spacing: 0.04px; } .d2 { letter-spacing: 0.09px; }
.actions { height: 94px; border-top: 2px solid #ccc; box-shadow: 0 -3px 4px rgba(0, 0, 0, .06); width: 2530px; display: flex; align-items: flex-start; background: #fff; position: relative; }
.req { margin: 26px 0 0 320px; width: 1464px; }
.cancel { margin-top: 26px; width: 137px; color: #1166bb; letter-spacing: 0.1px; }
.mark2 { margin-top: 3px; width: 319px; height: 84px; border: 10px solid #f00; border-radius: 10px; padding: 1px 0; position: relative; background: #fff; flex: none; }
.next { height: 62px; border: 2px solid #14508f; border-radius: 4px; background: linear-gradient(#2f8bed, #1166bb); color: #fff; font-weight: 700; text-align: center; line-height: 62px; text-shadow: 0 2px 2px #04284f; letter-spacing: -0.1px; }
.n2 { left: 146px; top: -62px; }
.track { position: absolute; right: 0; top: 30px; width: 30px; height: 978px; background: #fafafa; border-left: 2px solid #e8e8e8; padding: 6px 0 0 6px; }
.thumb { width: 16px; height: 904px; border-radius: 8px; background: #c1c1c1; }

.awsfoot { height: 60px; flex: none; background: #232f3e; display: flex; align-items: center; padding-left: 56px; color: #f2f2f2; white-space: nowrap; }
.bubble { width: 34px; height: 33px; margin-right: 20px; }
.fb { width: 171px; font-size: 28px; letter-spacing: 0.2px; padding-top: 1px; }
.globe { width: 34px; height: 34px; margin-right: 18px; }
.lang { width: 948px; font-size: 28px; letter-spacing: -0.4px; padding-top: 1px; }
.copy { width: 876px; font-size: 24px; color: #95a5a6; letter-spacing: 0.07px; }
.pp { width: 198px; font-size: 24px; letter-spacing: 0.05px; } .tou { font-size: 24px; }

.downloads { flex: 1; display: flex; background: #000; color: #e8e8e8; }
.dl { width: 454px; height: 72px; margin: 14px 0 0; border-right: 2px solid #3c3c3c; display: flex; align-items: center; font: 400 24px/32px Inter, "Noto Sans CJK SC", sans-serif; padding-left: 38px; white-space: nowrap; flex: none; }
.dl:first-child { width: 461px; padding-left: 45px; }
.dl span { width: 306px; padding-top: 8px; letter-spacing: 0; }
.file { width: 22px; height: 29px; margin-right: 31px; margin-top: -5px; }
.chev { width: 19px; height: 11px; }
.showall { width: 162px; height: 64px; margin: 16px 27px 0 49px; border: 2px solid #c8c8c8; border-radius: 9px; background: #111; text-align: center; font: 400 24px/60px Inter, sans-serif; flex: none; }
.dclose { width: 18px; height: 18px; margin-top: 39px; }

.dock { margin: 1px 0 0 186px; width: 2188px; height: 128px; flex: none; border-radius: 12px 12px 0 0; padding-left: 8px; display: flex; background: linear-gradient(rgba(0, 0, 0, .12), transparent 60%), linear-gradient(90deg, #505d74 0, #58647a 8%, #a9acb3 15%, #dcdcdc 21%, #e6e6e4 32%, #e8e8e4 75%, #dcdcda 82%, #a8a9ae 86%, #5b677b 91%, #49586f 96%); }
.defs { position: absolute; }
.app { width: 104px; height: 128px; flex: none; position: relative; }
.app > svg { width: 104px; height: 112px; filter: drop-shadow(0 2px 1px rgba(0, 0, 0, .25)); }
.app.run::after { content: ""; position: absolute; left: 48px; top: 116px; width: 8px; height: 8px; border-radius: 50%; background: #6a6a68; }
.app.run.dark::after { background: #000; }
.dsep { width: 2px; height: 96px; margin: 16px 0 0; background: #9b9b9b; }
.s1 { margin-left: 22px; margin-right: 22px; } .s2 { margin-left: 23px; margin-right: 20px; }
.thin { font-family: Lato, sans-serif; font-weight: 300; }
.may { font-family: Lato, sans-serif; }
.ps { font-family: "Open Sans", sans-serif; font-weight: 600; }
.mult rect { mix-blend-mode: multiply; }
</style>
